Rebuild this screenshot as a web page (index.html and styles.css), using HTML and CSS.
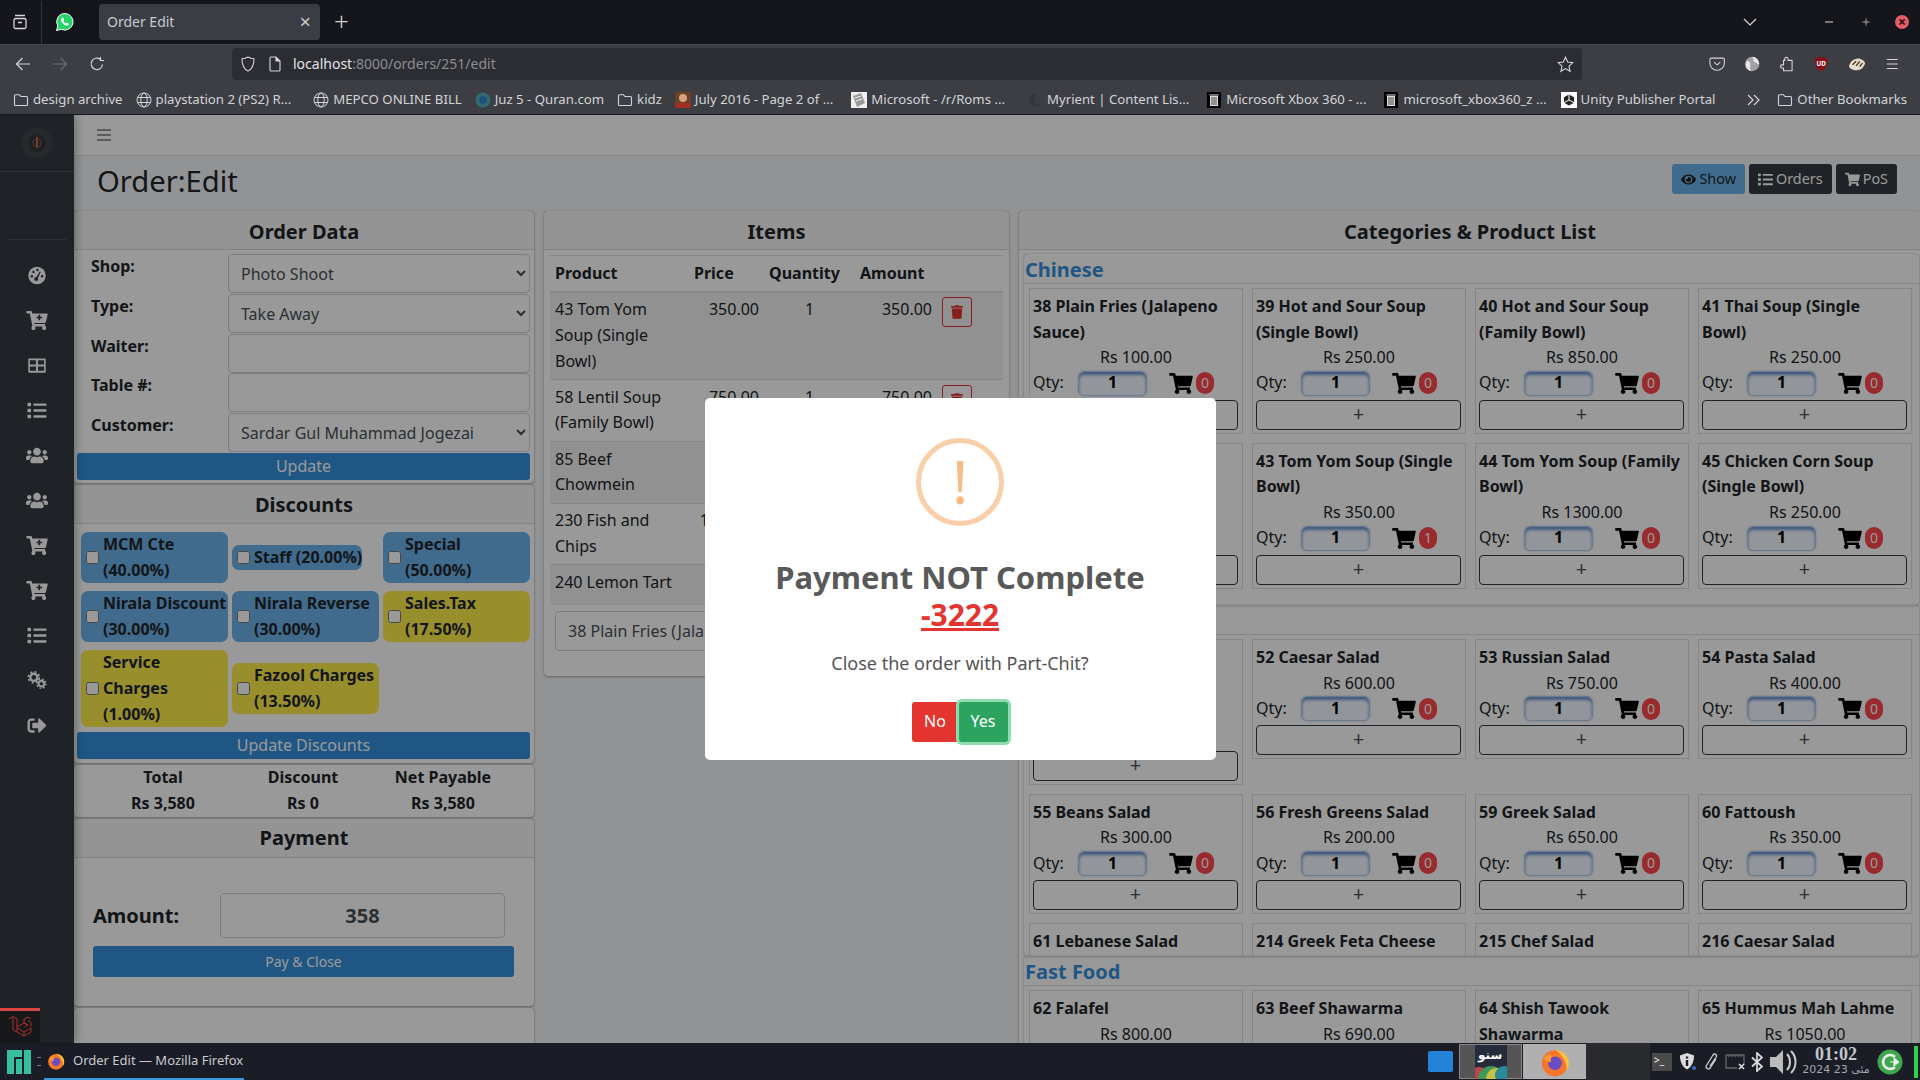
FILE: index.html
```html
<!DOCTYPE html>
<html lang="en">
<head>
  <meta charset="UTF-8">
  <title>Order Edit</title>
  <link rel="stylesheet" href="styles.css">
</head>
<body>

<!-- icon sprite -->
<svg class="sprite" xmlns="http://www.w3.org/2000/svg">
  <symbol id="i-cart" viewBox="0 0 576 512"><path d="M528.12 301.319l47.273-208C578.806 78.301 567.391 64 551.99 64H159.208l-9.166-44.81C147.758 8.021 137.93 0 126.529 0H24C10.745 0 0 10.745 0 24v16c0 13.255 10.745 24 24 24h69.883l70.248 343.435C147.325 417.1 136 435.222 136 456c0 30.928 25.072 56 56 56s56-25.072 56-56c0-15.674-6.447-29.835-16.824-40h209.647C430.447 426.165 424 440.326 424 456c0 30.928 25.072 56 56 56s56-25.072 56-56c0-22.172-12.888-41.332-31.579-50.405l5.517-24.276c3.413-15.018-8.002-29.319-23.403-29.319H218.117l-6.545-32h293.145c11.206 0 20.92-7.754 23.403-18.681z"/></symbol>
  <symbol id="i-cartplus" viewBox="0 0 576 512"><path d="M528.12 301.319l47.273-208C578.806 78.301 567.391 64 551.99 64H159.208l-9.166-44.81C147.758 8.021 137.93 0 126.529 0H24C10.745 0 0 10.745 0 24v16c0 13.255 10.745 24 24 24h69.883l70.248 343.435C147.325 417.1 136 435.222 136 456c0 30.928 25.072 56 56 56s56-25.072 56-56c0-15.674-6.447-29.835-16.824-40h209.647C430.447 426.165 424 440.326 424 456c0 30.928 25.072 56 56 56s56-25.072 56-56c0-22.172-12.888-41.332-31.579-50.405l5.517-24.276c3.413-15.018-8.002-29.319-23.403-29.319H218.117l-6.545-32h293.145c11.206 0 20.92-7.754 23.403-18.681z"/><path d="M350 100v150M275 175h150" stroke="#343a40" stroke-width="46" fill="none"/></symbol>
  <symbol id="i-trash" viewBox="0 0 448 512"><path d="M432 32H312l-9.4-18.7A24 24 0 0 0 281.1 0H166.8a23.72 23.72 0 0 0-21.4 13.3L136 32H16A16 16 0 0 0 0 48v32a16 16 0 0 0 16 16h416a16 16 0 0 0 16-16V48a16 16 0 0 0-16-16zM53.2 467a48 48 0 0 0 47.9 45h245.8a48 48 0 0 0 47.9-45L416 128H32z"/></symbol>
  <symbol id="i-eye" viewBox="0 0 576 512"><path d="M572.52 241.4C518.29 135.59 410.93 64 288 64S57.68 135.64 3.48 241.41a32.35 32.35 0 0 0 0 29.19C57.71 376.41 165.07 448 288 448s230.32-71.64 284.52-177.41a32.35 32.35 0 0 0 0-29.19zM288 400a144 144 0 1 1 144-144 143.93 143.93 0 0 1-144 144zm0-240a95.31 95.31 0 0 0-25.31 3.79 47.85 47.85 0 0 1-66.9 66.9A95.78 95.78 0 1 0 288 160z"/></symbol>
  <symbol id="i-list" viewBox="0 0 512 512"><path d="M80 368H16a16 16 0 0 0-16 16v64a16 16 0 0 0 16 16h64a16 16 0 0 0 16-16v-64a16 16 0 0 0-16-16zm0-320H16A16 16 0 0 0 0 64v64a16 16 0 0 0 16 16h64a16 16 0 0 0 16-16V64a16 16 0 0 0-16-16zm0 160H16a16 16 0 0 0-16 16v64a16 16 0 0 0 16 16h64a16 16 0 0 0 16-16v-64a16 16 0 0 0-16-16zm416 176H176a16 16 0 0 0-16 16v32a16 16 0 0 0 16 16h320a16 16 0 0 0 16-16v-32a16 16 0 0 0-16-16zm0-320H176a16 16 0 0 0-16 16v32a16 16 0 0 0 16 16h320a16 16 0 0 0 16-16V80a16 16 0 0 0-16-16zm0 160H176a16 16 0 0 0-16 16v32a16 16 0 0 0 16 16h320a16 16 0 0 0 16-16v-32a16 16 0 0 0-16-16z"/></symbol>
  <symbol id="i-users" viewBox="0 0 640 512"><path d="M96 224c35.3 0 64-28.7 64-64s-28.7-64-64-64-64 28.7-64 64 28.7 64 64 64zm448 0c35.3 0 64-28.7 64-64s-28.7-64-64-64-64 28.7-64 64 28.7 64 64 64zm32 32h-64c-17.6 0-33.5 7.1-45.1 18.6 40.3 22.1 68.9 62 75.1 109.4h66c17.7 0 32-14.3 32-32v-32c0-35.3-28.7-64-64-64zm-256 0c61.9 0 112-50.1 112-112S381.9 32 320 32 208 82.1 208 144s50.1 112 112 112zm76.8 32h-8.3c-20.8 10-43.9 16-68.5 16s-47.6-6-68.5-16h-8.3C179.6 288 128 339.6 128 403.2V432c0 26.5 21.5 48 48 48h288c26.5 0 48-21.5 48-48v-28.8c0-63.6-51.6-115.2-115.2-115.2zm-223.7-13.4C161.5 263.1 145.6 256 128 256H64c-35.3 0-64 28.7-64 64v32c0 17.7 14.3 32 32 32h65.9c6.3-47.4 34.9-87.3 75.2-109.4z"/></symbol>
  <symbol id="i-out" viewBox="0 0 512 512"><path d="M497 273L329 441c-15 15-41 4.500-41-17v-96H152c-13.300 0-24-10.700-24-24v-96c0-13.300 10.700-24 24-24h136V88c0-21.400 25.900-32 41-17l168 168c9.300 9.400 9.300 24.600 0 34zM192 436v-40c0-6.600-5.400-12-12-12H96c-17.700 0-32-14.300-32-32V160c0-17.700 14.300-32 32-32h84c6.600 0 12-5.400 12-12V76c0-6.600-5.400-12-12-12H96c-53 0-96 43-96 96v192c0 53 43 96 96 96h84c6.600 0 12-5.400 12-12z"/></symbol>
  <symbol id="i-gauge" viewBox="0 0 24 24"><circle cx="12" cy="12" r="11"/><g fill="#343a40"><circle cx="5.500" cy="13" r="1.500"/><circle cx="7.500" cy="7.500" r="1.500"/><circle cx="12.500" cy="5" r="1.500"/><circle cx="18.500" cy="13" r="1.500"/><circle cx="11" cy="16.500" r="2.500"/><path d="M10.500 15.500l5-8.500 1.200.6-4.200 9z"/></g></symbol>
  <symbol id="i-table" viewBox="0 0 24 24"><path d="M2 3h20a1 1 0 0 1 1 1v16a1 1 0 0 1-1 1H2a1 1 0 0 1-1-1V4a1 1 0 0 1 1-1zm1 2.500v5.200h7.700V5.500zm10.300 0v5.200H21V5.500zM3 13.300v5.200h7.700v-5.200zm10.300 0v5.200H21v-5.200z" fill-rule="evenodd"/></symbol>
  <symbol id="i-cogs" viewBox="0 0 24 24"><circle cx="8" cy="8" r="4.500" fill="none" stroke="currentColor" stroke-width="3"/><circle cx="8" cy="8" r="7" fill="none" stroke="currentColor" stroke-width="2" stroke-dasharray="2.600 2.900"/><circle cx="17.500" cy="16" r="3.500" fill="none" stroke="currentColor" stroke-width="2.600"/><circle cx="17.500" cy="16" r="5.800" fill="none" stroke="currentColor" stroke-width="1.800" stroke-dasharray="2.300 2.250"/></symbol>
  <symbol id="i-folder" viewBox="0 0 16 16"><path d="M1.500 4v8.500a1 1 0 0 0 1 1h11a1 1 0 0 0 1-1V5.500a1 1 0 0 0-1-1H8L6.500 2.800H2.500a1 1 0 0 0-1 1.200z" fill="none" stroke="currentColor" stroke-width="1.100"/></symbol>
  <symbol id="i-globe" viewBox="0 0 16 16"><g fill="none" stroke="currentColor" stroke-width="1"><circle cx="8" cy="8" r="7"/><ellipse cx="8" cy="8" rx="3.200" ry="7"/><path d="M1.500 5.500h13M1.500 10.500h13"/></g></symbol>
  <symbol id="i-xboxbin" viewBox="0 0 16 16"><rect x="1" width="14" height="16" fill="#000"/><path d="M4 4h8v10H4zM3.500 2.500h9v1h-9z" fill="#ddd"/><path d="M6 5v8M8 5v8M10 5v8" stroke="#222" stroke-width=".8"/></symbol>
  <symbol id="i-fox" viewBox="0 0 24 24"><circle cx="12" cy="13" r="10.500" fill="#f5762a"/><path d="M12 2c6 1 11 5 11 11 0 3-1 5-2 6 1-5-2-12-9-17z" fill="#ffc23f"/><circle cx="12" cy="13" r="5.500" fill="#6d4bc0"/><path d="M3 9c2-3 5-3 7-2-1 1-2 3-1 5-3 0-5-1-6-3z" fill="#ff9a2e"/></symbol>
</svg>

<!-- browser chrome -->
<header class="tabbar">
  <span class="tab-icon">
    <svg width="18" height="18" viewBox="0 0 18 18" fill="none" stroke="#d8d8dc" stroke-width="1.300"><rect x="3" y="5.500" width="12" height="10" rx="1.500"/><path d="M4 2.500h10M7 9.500h4"/></svg>
  </span>
  <span class="tab-pin">
    <svg width="20" height="20" viewBox="0 0 20 20"><path d="M10 1.500a8.300 8.300 0 0 0-7.200 12.500L1.500 18.500l4.700-1.200A8.300 8.300 0 1 0 10 1.500z" fill="#25d366" stroke="#fff" stroke-width="1"/><path d="M7 5.800c-1 .7-1.200 2-.6 3.400.8 1.800 2.400 3.500 4.300 4.200 1.400.5 2.500.1 3-1l-.1-.9-1.900-1-1 .9c-1-.4-1.900-1.300-2.400-2.400l.8-1-.9-2.400z" fill="#fff"/></svg>
  </span>
  <div class="tab">
    <span>Order Edit</span>
    <span class="tab-x">×</span>
  </div>
  <span class="tab-new">+</span>
  <div class="win-btns">
    <svg class="win-chev" width="14" height="8" viewBox="0 0 14 8" fill="none" stroke="#d8d8dc" stroke-width="1.200"><path d="M1 1l6 6 6-6"/></svg>
    <span class="win-min"></span>
    <svg class="win-max" width="10" height="10" viewBox="0 0 10 10" fill="#777"><path d="M5 0l1 4 4 1-4 1-1 4-1-4-4-1 4-1z"/></svg>
    <span class="win-close">×</span>
  </div>
</header>

<nav class="navbar">
  <svg class="nav-btn" width="16" height="16" viewBox="0 0 16 16" fill="none" stroke="#d5d5da" stroke-width="1.200"><path d="M15 8H1.500M7.500 2l-6 6 6 6"/></svg>
  <svg class="nav-btn" width="16" height="16" viewBox="0 0 16 16" fill="none" stroke="#6c6e73" stroke-width="1.200"><path d="M1 8h13.500M8.500 2l6 6-6 6"/></svg>
  <svg class="nav-btn" width="16" height="16" viewBox="0 0 16 16" fill="none" stroke="#d5d5da" stroke-width="1.200"><path d="M13.500 8.500A5.700 5.700 0 1 1 11.500 3.500M11.500 1v3.500H15"/></svg>
  <div class="urlbar">
    <svg width="16" height="16" viewBox="0 0 16 16" fill="none" stroke="#d5d5da" stroke-width="1.100"><path d="M8 1c2 1.200 4 1.700 6 1.800 0 6-2 10.500-6 12.200C4 13.300 2 8.800 2 2.800 4 2.700 6 2.200 8 1z"/></svg>
    <svg class="url-page" width="14" height="16" viewBox="0 0 14 16" fill="none" stroke="#d5d5da" stroke-width="1.100"><path d="M2 2a1 1 0 0 1 1-1h5l4 4v9a1 1 0 0 1-1 1H3a1 1 0 0 1-1-1z"/><path d="M8 1v4h4" fill="#d5d5da"/></svg>
    <span class="url-text"><b>localhost</b>:8000/orders/251/edit</span>
    <svg class="url-star" width="17" height="17" viewBox="0 0 17 17" fill="none" stroke="#d5d5da" stroke-width="1.100"><path d="M8.500 1.200l2.200 4.800 5.200.6-3.900 3.500 1.100 5.200-4.600-2.700-4.600 2.700 1.100-5.200L1.100 6.600 6.300 6z"/></svg>
  </div>
  <div class="nav-tools">
    <svg width="18" height="16" viewBox="0 0 18 16" fill="none" stroke="#d5d5da" stroke-width="1.200"><path d="M2.500 1.500h13a1.500 1.500 0 0 1 1.500 1.500v4a8 8 0 0 1-16 0V3a1.500 1.500 0 0 1 1.500-1.500zM5.500 6L9 9l3.500-3"/></svg>
    <svg width="18" height="18" viewBox="0 0 18 18"><circle cx="9" cy="9" r="8" fill="#a2a2a4"/><path d="M9 1a8 8 0 0 1 8 8c-2 1-3-2-5-2s-1-4-3-6zM3 6c2-1 4 1 4 3s-1 5 1 8a8 8 0 0 1-6-8z" fill="#e6e6e8"/></svg>
    <svg width="18" height="18" viewBox="0 0 18 18" fill="none" stroke="#d5d5da" stroke-width="1.200"><path d="M8 1.500c1.500 0 2.500 1 2 3.500h4.500v11.500H5v-3H2.500c-1 0-1-3.500 0-3.500H5V5h1.500C6 3 6.500 1.500 8 1.500z"/></svg>
    <svg width="18" height="18" viewBox="0 0 18 18"><path d="M9 1l7 2c0 7-2 12-7 14C4 15 2 10 2 3z" fill="#8a0f1d"/><text x="9" y="11.500" class="ublock">UD</text></svg>
    <svg width="20" height="16" viewBox="0 0 20 16"><path d="M1 11c1-5 5-9 10-9 4 0 7 3 8 5-1 4-4 8-9 8-4 0-7-1-9-4z" fill="#e5dcc9"/><path d="M5 9l4-4M9 10l4-5M13 11l3-4" stroke="#3a2f25" stroke-width="1.400"/></svg>
    <svg width="16" height="14" viewBox="0 0 16 14" fill="none" stroke="#d5d5da" stroke-width="1.200"><path d="M2 2h12M2 7h12M2 12h12"/></svg>
  </div>
</nav>

<div class="bookmarks">
  <a class="bm"><svg class="bm-ico"><use href="#i-folder"/></svg>design archive</a>
  <a class="bm"><svg class="bm-ico"><use href="#i-globe"/></svg>playstation 2 (PS2) R...</a>
  <a class="bm"><svg class="bm-ico"><use href="#i-globe"/></svg>MEPCO ONLINE BILL</a>
  <a class="bm"><svg class="bm-ico" viewBox="0 0 16 16"><circle cx="8" cy="8" r="7.500" fill="#28a0a8" opacity=".45"/><circle cx="8" cy="8" r="4" fill="#23507a"/></svg>Juz 5 - Quran.com</a>
  <a class="bm"><svg class="bm-ico"><use href="#i-folder"/></svg>kidz</a>
  <a class="bm"><svg class="bm-ico" viewBox="0 0 16 16"><rect width="16" height="16" fill="#6a4026"/><circle cx="8" cy="6" r="4" fill="#d9a27c"/><rect y="11" width="16" height="5" fill="#a32f24"/></svg>July 2016 - Page 2 of ...</a>
  <a class="bm"><svg class="bm-ico" viewBox="0 0 16 16"><rect width="16" height="16" fill="#eee"/><path d="M2 4l8-3 4 10-8 4z" fill="#9a9a9a"/><path d="M4 6l6-2M5 9l6-2" stroke="#eee"/></svg>Microsoft - /r/Roms ...</a>
  <a class="bm"><svg class="bm-ico" viewBox="0 0 16 16"><path d="M10 2a6.500 6.500 0 1 0 3 11 6 6 0 0 1-3-11z" fill="#34353f"/></svg>Myrient | Content Lis...</a>
  <a class="bm"><svg class="bm-ico"><use href="#i-xboxbin"/></svg>Microsoft Xbox 360 - ...</a>
  <a class="bm"><svg class="bm-ico"><use href="#i-xboxbin"/></svg>microsoft_xbox360_z ...</a>
  <a class="bm"><svg class="bm-ico" viewBox="0 0 16 16"><rect width="16" height="16" fill="#fff"/><path d="M8 2.500l5 2.800v5.400l-5 2.800-5-2.800V5.300z" fill="#222"/><path d="M8 8V2.500M8 8l5 2.700M8 8l-5 2.700" stroke="#fff"/></svg>Unity Publisher Portal</a>
  <svg class="bm-more" width="14" height="12" viewBox="0 0 14 12" fill="none" stroke="#d5d5da" stroke-width="1.200"><path d="M1 1l5 5-5 5M7 1l5 5-5 5"/></svg>
  <a class="bm"><svg class="bm-ico"><use href="#i-folder"/></svg>Other Bookmarks</a>
</div>

<!-- the page -->
<div class="page">
  <aside class="sidebar">
    <div class="brand">
      <svg width="34" height="34" viewBox="0 0 34 34"><circle cx="17" cy="17" r="15" fill="#40464c" stroke="#3c4248" stroke-width="3" stroke-dasharray="3 2"/><circle cx="17" cy="17" r="9" fill="#34393e"/><path d="M17 11v11" stroke="#b07040" stroke-width="2"/><circle cx="17" cy="17" r="4" fill="none" stroke="#9a5040"/></svg>
    </div>
    <div class="side-user"></div>
    <ul class="side-menu">
      <li><svg class="side-ico"><use href="#i-gauge"/></svg></li>
      <li><svg class="side-ico"><use href="#i-cartplus"/></svg></li>
      <li><svg class="side-ico"><use href="#i-table"/></svg></li>
      <li><svg class="side-ico"><use href="#i-list"/></svg></li>
      <li><svg class="side-ico"><use href="#i-users"/></svg></li>
      <li><svg class="side-ico"><use href="#i-users"/></svg></li>
      <li><svg class="side-ico"><use href="#i-cartplus"/></svg></li>
      <li><svg class="side-ico"><use href="#i-cartplus"/></svg></li>
      <li><svg class="side-ico"><use href="#i-list"/></svg></li>
      <li><svg class="side-ico"><use href="#i-cogs"/></svg></li>
      <li><svg class="side-ico"><use href="#i-out"/></svg></li>
    </ul>
  </aside>

  <main class="content">
    <div class="topnav">
      <svg width="14" height="14" viewBox="0 0 14 14" fill="none" stroke="#7a7a7a" stroke-width="1.600"><path d="M0 2h14M0 7h14M0 12h14"/></svg>
    </div>

    <div class="title-row">
      <h1>Order:Edit</h1>
      <div class="title-btns">
        <a class="btn btn-info"><svg class="btn-ico"><use href="#i-eye"/></svg>Show</a>
        <a class="btn btn-dark"><svg class="btn-ico"><use href="#i-list"/></svg>Orders</a>
        <a class="btn btn-dark"><svg class="btn-ico"><use href="#i-cart"/></svg>PoS</a>
      </div>
    </div>

    <div class="columns">
      <div class="col-left">
        <section class="card card-order">
          <h3 class="card-head">Order Data</h3>
          <div class="form-rows">
            <label>Shop:</label>
            <select><option>Photo Shoot</option></select>
            <label>Type:</label>
            <select><option>Take Away</option></select>
            <label>Waiter:</label>
            <input type="text">
            <label>Table #:</label>
            <input type="text">
            <label>Customer:</label>
            <select><option>Sardar Gul Muhammad Jogezai</option></select>
          </div>
          <button class="wide-btn">Update</button>
        </section>

        <section class="card card-disc">
          <h3 class="card-head">Discounts</h3>
          <div class="chips">
            <label class="chip chip-blue"><input type="checkbox">MCM Cte (40.00%)</label>
            <label class="chip chip-blue"><input type="checkbox">Staff (20.00%)</label>
            <label class="chip chip-blue"><input type="checkbox">Special (50.00%)</label>
            <label class="chip chip-blue"><input type="checkbox">Nirala Discount (30.00%)</label>
            <label class="chip chip-blue"><input type="checkbox">Nirala Reverse (30.00%)</label>
            <label class="chip chip-yellow"><input type="checkbox">Sales.Tax (17.50%)</label>
            <label class="chip chip-yellow"><input type="checkbox">Service Charges (1.00%)</label>
            <label class="chip chip-yellow"><input type="checkbox">Fazool Charges (13.50%)</label>
          </div>
          <button class="wide-btn">Update Discounts</button>
        </section>

        <section class="card totals">
          <b>Total</b><b>Discount</b><b>Net Payable</b>
          <b>Rs 3,580</b><b>Rs 0</b><b>Rs 3,580</b>
        </section>

        <section class="card card-pay">
          <h3 class="card-head">Payment</h3>
          <div class="pay-body">
            <div class="pay-row">
              <label>Amount:</label>
              <input type="text" value="358">
            </div>
            <button class="pay-btn">Pay &amp; Close</button>
          </div>
        </section>

        <section class="card card-empty"></section>
      </div>

      <section class="card card-items">
        <h3 class="card-head">Items</h3>
        <table class="items">
          <thead>
            <tr><th>Product</th><th>Price</th><th>Quantity</th><th>Amount</th><th></th></tr>
          </thead>
          <tbody>
            <tr><td>43 Tom Yom Soup (Single Bowl)</td><td class="num">350.00</td><td class="mid">1</td><td class="num">350.00</td><td><a class="trash"><svg><use href="#i-trash"/></svg></a></td></tr>
            <tr><td>58 Lentil Soup (Family Bowl)</td><td class="num">750.00</td><td class="mid">1</td><td class="num">750.00</td><td><a class="trash"><svg><use href="#i-trash"/></svg></a></td></tr>
            <tr><td>85 Beef Chowmein</td><td class="num">800.00</td><td class="mid">1</td><td class="num">800.00</td><td><a class="trash"><svg><use href="#i-trash"/></svg></a></td></tr>
            <tr><td>230 Fish and Chips</td><td class="num">1200.00</td><td class="mid">1</td><td class="num">1200.00</td><td><a class="trash"><svg><use href="#i-trash"/></svg></a></td></tr>
            <tr><td>240 Lemon Tart</td><td class="num">480.00</td><td class="mid">1</td><td class="num">480.00</td><td><a class="trash"><svg><use href="#i-trash"/></svg></a></td></tr>
          </tbody>
        </table>
        <div class="add-select">38 Plain Fries (Jalapeno Sauce)</div>
      </section>

      <section class="card card-cats">
        <h3 class="card-head">Categories &amp; Product List</h3>

        <div class="cat">
          <h4>Chinese</h4>
          <div class="prod-grid">
            <div class="prod"><b>38 Plain Fries (Jalapeno Sauce)</b><p>Rs 100.00</p><div class="qty"><span>Qty:</span><input value="1"><svg><use href="#i-cart"/></svg><em>0</em></div><button>+</button></div>
            <div class="prod"><b>39 Hot and Sour Soup (Single Bowl)</b><p>Rs 250.00</p><div class="qty"><span>Qty:</span><input value="1"><svg><use href="#i-cart"/></svg><em>0</em></div><button>+</button></div>
            <div class="prod"><b>40 Hot and Sour Soup (Family Bowl)</b><p>Rs 850.00</p><div class="qty"><span>Qty:</span><input value="1"><svg><use href="#i-cart"/></svg><em>0</em></div><button>+</button></div>
            <div class="prod"><b>41 Thai Soup (Single Bowl)</b><p>Rs 250.00</p><div class="qty"><span>Qty:</span><input value="1"><svg><use href="#i-cart"/></svg><em>0</em></div><button>+</button></div>
            <div class="prod"><b>42 Thai Soup (Family Bowl)</b><p>Rs 850.00</p><div class="qty"><span>Qty:</span><input value="1"><svg><use href="#i-cart"/></svg><em>0</em></div><button>+</button></div>
            <div class="prod"><b>43 Tom Yom Soup (Single Bowl)</b><p>Rs 350.00</p><div class="qty"><span>Qty:</span><input value="1"><svg><use href="#i-cart"/></svg><em>1</em></div><button>+</button></div>
            <div class="prod"><b>44 Tom Yom Soup (Family Bowl)</b><p>Rs 1300.00</p><div class="qty"><span>Qty:</span><input value="1"><svg><use href="#i-cart"/></svg><em>0</em></div><button>+</button></div>
            <div class="prod"><b>45 Chicken Corn Soup (Single Bowl)</b><p>Rs 250.00</p><div class="qty"><span>Qty:</span><input value="1"><svg><use href="#i-cart"/></svg><em>0</em></div><button>+</button></div>
          </div>
        </div>

        <div class="cat">
          <h4>Salads</h4>
          <div class="prod-grid">
            <div class="prod"><b>51 Green Garden Salad (Family)</b><p>Rs 500.00</p><div class="qty"><span>Qty:</span><input value="1"><svg><use href="#i-cart"/></svg><em>0</em></div><button>+</button></div>
            <div class="prod"><b>52 Caesar Salad</b><p>Rs 600.00</p><div class="qty"><span>Qty:</span><input value="1"><svg><use href="#i-cart"/></svg><em>0</em></div><button>+</button></div>
            <div class="prod"><b>53 Russian Salad</b><p>Rs 750.00</p><div class="qty"><span>Qty:</span><input value="1"><svg><use href="#i-cart"/></svg><em>0</em></div><button>+</button></div>
            <div class="prod"><b>54 Pasta Salad</b><p>Rs 400.00</p><div class="qty"><span>Qty:</span><input value="1"><svg><use href="#i-cart"/></svg><em>0</em></div><button>+</button></div>
            <div class="prod"><b>55 Beans Salad</b><p>Rs 300.00</p><div class="qty"><span>Qty:</span><input value="1"><svg><use href="#i-cart"/></svg><em>0</em></div><button>+</button></div>
            <div class="prod"><b>56 Fresh Greens Salad</b><p>Rs 200.00</p><div class="qty"><span>Qty:</span><input value="1"><svg><use href="#i-cart"/></svg><em>0</em></div><button>+</button></div>
            <div class="prod"><b>59 Greek Salad</b><p>Rs 650.00</p><div class="qty"><span>Qty:</span><input value="1"><svg><use href="#i-cart"/></svg><em>0</em></div><button>+</button></div>
            <div class="prod"><b>60 Fattoush</b><p>Rs 350.00</p><div class="qty"><span>Qty:</span><input value="1"><svg><use href="#i-cart"/></svg><em>0</em></div><button>+</button></div>
            <div class="prod"><b>61 Lebanese Salad</b></div>
            <div class="prod"><b>214 Greek Feta Cheese</b></div>
            <div class="prod"><b>215 Chef Salad</b></div>
            <div class="prod"><b>216 Caesar Salad</b></div>
          </div>
        </div>

        <div class="cat">
          <h4>Fast Food</h4>
          <div class="prod-grid">
            <div class="prod"><b>62 Falafel</b><p>Rs 800.00</p></div>
            <div class="prod"><b>63 Beef Shawarma</b><p>Rs 690.00</p></div>
            <div class="prod"><b>64 Shish Tawook Shawarma</b></div>
            <div class="prod"><b>65 Hummus Mah Lahme</b><p>Rs 1050.00</p></div>
          </div>
        </div>
      </section>
    </div>
  </main>

  <!-- alert over the page -->
  <div class="backdrop">
    <div class="modal">
      <div class="modal-icon">!</div>
      <h2>Payment NOT Complete<br><u>-3222</u></h2>
      <p>Close the order with Part-Chit?</p>
      <div class="modal-btns">
        <button class="btn-no">No</button>
        <button class="btn-yes">Yes</button>
      </div>
    </div>
  </div>

  <div class="debugbar">
    <svg width="24" height="24" viewBox="0 0 24 24" fill="none" stroke="#a8302c" stroke-width="1"><path d="M1 4l4-2.500L9 4v13l7 4 7-4v-4l-7 4-7-4M5 1.500V15l4 2M16 21v-4M9 12l7-4 4 2-3.500 2M20 5.500l3 2v4M16 8V4l4-2 3 2M16 8l4 2"/></svg>
  </div>
</div>

<!-- desktop panel -->
<footer class="taskbar">
  <svg class="tb-logo" width="26" height="26" viewBox="0 0 26 26" fill="#35bf9c"><path d="M1 1h15v7H8v17H1zM10 10h6v15h-6zM18 1h7v24h-7z"/></svg>
  <span class="tb-dots"></span>
  <div class="tb-task">
    <svg width="18" height="18"><use href="#i-fox"/></svg>
    <span>Order Edit — Mozilla Firefox</span>
  </div>
  <div class="tb-right">
    <span class="tb-blue"></span>
    <span class="tb-tile tb-tile-dark">
      <svg width="32" height="34" viewBox="0 0 32 34"><rect width="32" height="34" fill="#252b3a"/><circle cx="4" cy="30" r="8" fill="#c04545"/><circle cx="16" cy="34" r="13" fill="#3f9a5a"/><circle cx="22" cy="34" r="11" fill="#c8c040"/><circle cx="29" cy="30" r="9" fill="#2a8a9a"/></svg>
      <i class="tile-word">سنو</i>
    </span>
    <span class="tb-tile tb-tile-light"><svg width="30" height="30"><use href="#i-fox"/></svg></span>
    <span class="tb-gap"></span>
    <span class="tb-term">&gt;_</span>
    <svg class="tray" width="18" height="20" viewBox="0 0 18 20"><path d="M8 1l7 2.500c0 6-2 11-7 14C3 14.500 1 9.500 1 3.500z" fill="#ddd"/><path d="M6.800 4.500h2.400v2H6.800zM6.800 8h2.400v6H6.800z" fill="#1a1d26"/><circle cx="15" cy="16" r="2" fill="#3a6fc0"/></svg>
    <svg class="tray" width="16" height="20" viewBox="0 0 16 20" fill="none" stroke="#ccc" stroke-width="1.300"><path d="M13 7l-6 9c-1.500 2-5 0-3.500-2.500L10 3c1.500-2 4.500-.5 3.200 2L7 14"/></svg>
    <svg class="tray" width="20" height="16" viewBox="0 0 20 16" fill="none" stroke="#666" stroke-width="1.300"><path d="M1 1h18v10M1 1v13h11"/><path d="M4 1v2M7 1v2M10 1v2M13 1v2M16 1v2" /><path d="M14 10l5 5M19 10l-5 5" stroke="#ddd" stroke-width="1.600"/></svg>
    <svg class="tray" width="12" height="20" viewBox="0 0 12 20" fill="none" stroke="#ddd" stroke-width="1.700"><path d="M1 5.500l10 9-5 4.500V1l5 4.500-10 9"/></svg>
    <svg class="tray tray-vol" width="28" height="26" viewBox="0 0 28 26"><path d="M1 8h6l7-7v24l-7-7H1z" fill="#bbb"/><path d="M18 5c4 4 4 12 0 16M22 2c6 6 6 16 0 22" fill="none" stroke="#ccc" stroke-width="2"/></svg>
    <div class="clock">
      <b>01:02</b>
      <span>2024 مئی 23</span>
    </div>
    <svg class="tray" width="26" height="26" viewBox="0 0 26 26"><circle cx="13" cy="13" r="12.500" fill="#3fa84f"/><path d="M18 8a7 7 0 1 0 0 10" fill="none" stroke="#eee" stroke-width="2.600"/><path d="M13 13h7M17 9l5 4-5 4z" fill="#eee" stroke="#eee"/></svg>
    <span class="tb-bar"></span>
  </div>
</footer>

</body>
</html>
```

FILE: styles.css
```css
* {
  box-sizing: border-box;
}

html, body {
  height: 100%;
}

body {
  margin: 0;
  font-family: "Noto Sans", sans-serif;
  font-size: 16px;
  line-height: 25.6px;
  color: #212529;
  display: flex;
  flex-direction: column;
  overflow: hidden;
}

.sprite {
  display: none;
}

/* browser chrome */
.tabbar {
  height: 44px;
  flex: none;
  background-color: #14161b;
  display: flex;
  align-items: center;
  color: #d8d8dc;
  font-size: 14px;
}

.tab-icon {
  width: 42px;
  height: 43px;
  padding-left: 11px;
  display: flex;
  align-items: center;
  border-right: 1px solid #33353a;
}

.tab-pin {
  width: 57px;
  padding-left: 13px;
  display: flex;
}

.tab {
  width: 221px;
  height: 36px;
  background-color: #3b3d44;
  border-radius: 4px;
  padding: 0 9px 0 8px;
  display: flex;
  align-items: center;
  justify-content: space-between;
  color: #c8c9cd;
}

.tab-x {
  font-size: 20px;
}

.tab-new {
  margin-left: 14px;
  font-size: 26px;
  font-weight: 300;
}

.win-btns {
  margin-left: auto;
  display: flex;
  align-items: center;
  padding-right: 11px;
}

.win-chev {
  margin-right: 68px;
}

.win-min {
  width: 8px;
  height: 2px;
  background-color: #777;
  margin-right: 28px;
}

.win-max {
  margin-right: 24px;
}

.win-close {
  width: 14px;
  height: 14px;
  border-radius: 50%;
  background-color: #e35d6a;
  color: #2a1015;
  font-size: 14px;
  font-weight: 700;
  line-height: 13px;
  text-align: center;
}

.navbar {
  height: 36px;
  flex: none;
  background-color: #3c3e44;
  display: flex;
  align-items: flex-end;
  border-top: 1px solid #44464c;
}

.nav-btn {
  margin: 0 0 8px 15px;
  flex: none;
}

.nav-btn + .nav-btn {
  margin-left: 21px;
}

.urlbar {
  width: 1350px;
  height: 32px;
  margin-left: 127px;
  background-color: #2b2d32;
  border-radius: 4px;
  display: flex;
  align-items: center;
  padding: 0 8px 0 8px;
  color: #8d8e93;
  font-size: 14px;
}

.url-page {
  margin-left: 12px;
}

.url-text {
  margin-left: 11px;
}

.url-text b {
  font-weight: 400;
  color: #e2e2e6;
}

.url-star {
  margin-left: auto;
}

.nav-tools {
  margin-left: 127px;
  width: 190px;
  height: 32px;
  display: flex;
  align-items: center;
  gap: 18.5px;
}

.ublock {
  font-size: 7px;
  font-weight: 700;
  fill: #fff;
  text-anchor: middle;
}

.bookmarks {
  height: 35px;
  flex: none;
  background-color: #3c3e44;
  border-bottom: 1px solid #17181c;
  display: flex;
  align-items: center;
  padding: 6px 0 0 13px;
  font-size: 13.2px;
  color: #d3d4d8;
  white-space: nowrap;
}

.bm {
  display: flex;
  align-items: center;
  gap: 4px;
  margin-right: 13px;
}

.bm:nth-child(2) { margin-right: 22px; }
.bm:nth-child(6) { margin-right: 18px; }
.bm:nth-child(7) { margin-right: 22px; }
.bm:nth-child(8) { margin-right: 17px; }
.bm:nth-child(9) { margin-right: 17px; }
.bm:nth-child(10) { margin-right: 14px; }

.bm-ico {
  width: 16px;
  height: 16px;
  flex: none;
}

.bm-more {
  margin: 0 16px 0 auto;
}

/* page */
.page {
  flex: 1;
  min-height: 0;
  position: relative;
  display: flex;
  overflow: hidden;
  background-color: #f4f6f9;
}

.sidebar {
  width: 74px;
  flex: none;
  background-color: #343a40;
  box-shadow: 0 0 10px rgba(0, 0, 0, 0.4);
  z-index: 1;
}

.brand {
  height: 57px;
  border-bottom: 1px solid #4b545c;
  display: flex;
  align-items: center;
  justify-content: center;
}

.side-user {
  height: 68px;
  margin: 0 8px;
  border-bottom: 1px solid #4b545c;
}

.side-menu {
  list-style: none;
  margin: 13px 0 0;
  padding: 0;
}

.side-menu li {
  height: 45px;
  display: flex;
  align-items: center;
  justify-content: center;
  color: #fff;
}

.side-ico {
  width: 22px;
  height: 19px;
  fill: currentColor;
}

.content {
  flex: 1;
  min-width: 0;
}

.topnav {
  height: 41px;
  background-color: #fff;
  border-bottom: 1px solid #dee2e6;
  padding-left: 23px;
  display: flex;
  align-items: center;
}

.title-row {
  height: 55px;
  padding: 0 23px;
  display: flex;
  align-items: flex-start;
  justify-content: space-between;
}

h1 {
  margin: 0;
  font-size: 29.2px;
  font-weight: 400;
  line-height: 50px;
}

.title-btns {
  display: flex;
  gap: 4px;
  padding-top: 8px;
}

.btn {
  height: 30px;
  padding: 0 9px;
  border-radius: 3px;
  font-size: 14.4px;
  display: flex;
  align-items: center;
  gap: 3px;
}

.btn-ico {
  width: 15px;
  height: 15px;
  fill: currentColor;
}

.btn-info {
  background-color: #6cb2eb;
  color: #212529;
}

.btn-dark {
  background-color: #343a40;
  color: #fff;
}

.columns {
  display: grid;
  grid-template-columns: 460px 465px 902px;
  gap: 10px 10px;
  align-items: start;
}

.col-left {
  display: flex;
  flex-direction: column;
  gap: 2px;
}

/* cards */
.card {
  background-color: #fff;
  border-radius: 4px;
  box-shadow: 0 0 1px rgba(0, 0, 0, 0.3), 0 1px 3px rgba(0, 0, 0, 0.3);
}

.card-head {
  margin: 0;
  height: 39px;
  background-color: rgba(0, 0, 0, 0.03);
  border-bottom: 1px solid rgba(0, 0, 0, 0.125);
  font-size: 20px;
  font-weight: 700;
  line-height: 41px;
  text-align: center;
}

.card-order {
  height: 272px;
}

.form-rows {
  display: grid;
  grid-template-columns: 154px 302px;
  grid-auto-rows: 39.8px;
  padding-top: 4px;
}

.form-rows label {
  font-weight: 700;
  padding-left: 17px;
  line-height: 25px;
}

.form-rows input,
.form-rows select {
  height: 39px;
  border: 1px solid #ced4da;
  border-radius: 4px;
  background-color: #fff;
  color: #495057;
  font: inherit;
  padding: 1px 8px 0;
}

.wide-btn {
  display: block;
  width: 453px;
  height: 27px;
  margin-left: 3px;
  background-color: #3490dc;
  border: none;
  border-radius: 3px;
  color: #fff;
  font: inherit;
  padding: 0;
}

.card-disc {
  height: 278px;
}

.card-disc .card-head {
  line-height: 40px;
}

.chips {
  display: grid;
  grid-template-columns: repeat(3, 147px);
  gap: 8px 4px;
  padding: 8px 0 5px 7px;
  align-items: center;
}

.chip {
  justify-self: start;
  display: flex;
  align-items: center;
  gap: 4px;
  padding-left: 5px;
  border-radius: 7px;
  font-weight: 700;
}

.chip input {
  margin: 0;
  width: 13px;
  height: 13px;
  flex: none;
}

.chip-blue {
  background-color: #6cb2eb;
}

.chip-yellow {
  background-color: #ffed4a;
}

.totals {
  height: 52px;
  display: grid;
  grid-template-columns: repeat(3, 140px);
  padding-left: 19px;
  text-align: center;
}

.card-pay {
  height: 187px;
}

.card-pay .card-head {
  line-height: 38px;
}

.pay-body {
  padding: 35px 20px 0 19px;
}

.pay-row {
  display: flex;
  align-items: center;
  font-size: 20px;
  font-weight: 700;
}

.pay-row label {
  width: 127px;
}

.pay-row input {
  width: 285px;
  height: 45px;
  border: 1px solid #ced4da;
  border-radius: 4px;
  background-color: #fff;
  color: #495057;
  font: inherit;
  text-align: center;
}

.pay-btn {
  display: block;
  width: 421px;
  height: 31px;
  margin-top: 8px;
  background-color: #3490dc;
  border: none;
  border-radius: 3px;
  color: #fff;
  font-family: inherit;
  font-size: 14px;
}

.card-empty {
  height: 60px;
}

/* items */
.card-items {
  height: 465px;
  padding-bottom: 25px;
}

.items {
  width: 453px;
  margin: 5px 0 0 6px;
  border-collapse: collapse;
  table-layout: fixed;
}

.items th:nth-child(1) { width: 139px; }
.items th:nth-child(2) { width: 75px; }
.items th:nth-child(3) { width: 91px; }
.items th:nth-child(4) { width: 82px; }

.items th {
  text-align: left;
  padding: 5px 5px 4px;
  border-top: 1px solid #dee2e6;
  border-bottom: 2px solid #dee2e6;
}

.items td {
  padding: 4.8px 5px;
  vertical-align: top;
  border-top: 1px solid #dee2e6;
}

.items tbody tr:nth-child(odd) {
  background-color: rgba(0, 0, 0, 0.05);
}

.items .num {
  text-align: right;
}

.items .mid {
  text-align: center;
}

.trash {
  width: 30px;
  height: 30px;
  border: 1px solid #e3342f;
  border-radius: 3px;
  display: flex;
  align-items: center;
  justify-content: center;
}

.trash svg {
  width: 12px;
  height: 14px;
  fill: #e3342f;
}

.add-select {
  height: 40px;
  margin: 6px 5px 0 11px;
  padding: 0 12px;
  border: 1px solid #ced4da;
  border-radius: 4px;
  color: #495057;
  line-height: 38px;
}

/* products */
.card-cats {
  height: 900px;
  overflow: hidden;
}

.cat {
  height: 351px;
  margin: 4px 2px 0 5px;
  overflow: hidden;
  border-radius: 4px;
  box-shadow: 0 0 1px rgba(0, 0, 0, 0.3), 0 1px 3px rgba(0, 0, 0, 0.2);
}

.cat + .cat {
  margin-top: 0;
}

.cat h4 {
  margin: 0;
  height: 30px;
  padding-left: 1px;
  font-size: 20px;
  font-weight: 700;
  line-height: 32px;
  color: #3490dc;
  border-bottom: 1px solid rgba(0, 0, 0, 0.125);
}

.prod-grid {
  display: grid;
  grid-template-columns: repeat(4, 214px);
  gap: 9px;
  padding: 4px 0 0 5px;
  align-items: start;
}

.prod {
  border: 1px solid rgba(0, 0, 0, 0.125);
  padding: 5px 3px 3px 3px;
}

.prod b {
  display: block;
}

.prod p {
  margin: 0;
  text-align: center;
}

.qty {
  height: 25px;
  display: flex;
  align-items: center;
}

.qty span {
  width: 45px;
}

.qty input {
  width: 69px;
  height: 25px;
  border: 1px solid #b5cde8;
  border-radius: 6px;
  background-color: #f4f9ff;
  box-shadow: inset 0 3px 3px #6f97d6, 0 0 2px #a9c6ea;
  font: inherit;
  font-weight: 700;
  text-align: center;
  padding: 0;
}

.qty svg {
  width: 24px;
  height: 21px;
  margin-left: 22px;
  flex: none;
}

.qty em {
  width: 18px;
  height: 22px;
  margin-left: 3px;
  border-radius: 9px;
  background-color: #ff464e;
  color: #fff;
  font-style: normal;
  font-size: 14px;
  line-height: 22px;
  text-align: center;
}

.prod button {
  display: block;
  width: 205px;
  height: 30px;
  margin-top: 4px;
  background: none;
  border: 1px solid #343a40;
  border-radius: 4px;
  color: #4b5259;
  font: inherit;
  font-size: 20px;
  line-height: 24px;
  padding: 0 0 2px;
}

/* alert */
.backdrop {
  position: absolute;
  inset: 0;
  z-index: 5;
  background-color: rgba(0, 0, 0, 0.4);
  display: flex;
  align-items: center;
  justify-content: center;
}

.modal {
  width: 511px;
  height: 362px;
  background-color: #fff;
  border-radius: 5px;
  padding-top: 40px;
  text-align: center;
}

.modal-icon {
  width: 88px;
  height: 88px;
  margin: 0 auto;
  border: 5px solid #facea8;
  border-radius: 50%;
  color: #f8bb86;
  font-size: 60px;
  line-height: 76px;
}

.modal h2 {
  margin: 33px 0 0;
  font-size: 31px;
  font-weight: 700;
  line-height: 36.5px;
  color: #595959;
}

.modal u {
  font-size: 30px;
  color: #e3342f;
}

.modal p {
  margin: 16px 0 0;
  font-size: 18px;
  line-height: 29px;
  color: #545454;
}

.modal-btns {
  margin-top: 24px;
  display: flex;
  justify-content: center;
}

.modal-btns button {
  height: 40px;
  border: none;
  border-radius: 3px;
  color: #fff;
  font: inherit;
  padding: 0;
}

.btn-no {
  width: 47px;
  margin-left: -1px;
  background-color: #e3342f;
}

.btn-yes {
  width: 49px;
  background-color: #2ca35f;
  box-shadow: 0 0 0 3px #8fdcb0;
  position: relative;
}

.debugbar {
  position: absolute;
  left: 0;
  bottom: 0;
  z-index: 6;
  width: 40px;
  height: 35px;
  background-color: #18181b;
  border-top: 3px solid #d9453f;
  display: flex;
  align-items: center;
  justify-content: center;
}

/* desktop panel */
.taskbar {
  height: 37px;
  flex: none;
  background-color: #1a1d26;
  display: flex;
  align-items: center;
  color: #c9cbd0;
  font-size: 13px;
}

.tb-logo {
  margin-left: 6px;
  flex: none;
}

.tb-dots {
  width: 4px;
  height: 9px;
  margin-left: 5px;
  border-top: 1px solid #777;
  border-bottom: 1px solid #777;
  flex: none;
}

.tb-task {
  width: 200px;
  height: 37px;
  margin-left: 3px;
  padding-left: 3px;
  border-bottom: 2px solid #3498db;
  display: flex;
  align-items: center;
  gap: 8px;
  white-space: nowrap;
}

.tb-task svg {
  flex: none;
}

.tb-right {
  margin-left: auto;
  display: flex;
  align-items: center;
  height: 37px;
}

.tb-blue {
  width: 25px;
  height: 21px;
  background-color: #2283d8;
  border-radius: 2px;
  margin-right: 6px;
}

.tb-tile {
  width: 63px;
  height: 35px;
  display: flex;
  align-items: center;
  justify-content: center;
  position: relative;
}

.tb-tile-dark {
  background-color: #555;
  border: 1px solid #888;
}

.tb-tile-light {
  background-color: #b0b0b0;
  margin-left: 1px;
}

.tile-word {
  position: absolute;
  top: 2px;
  left: 18px;
  color: #fff;
  font-family: "DejaVu Sans", sans-serif;
  font-style: normal;
  font-size: 12px;
  font-weight: 700;
  line-height: 16px;
}

.tb-gap {
  width: 64px;
  height: 37px;
  background-color: #2a2b2f;
}

.tb-term {
  width: 20px;
  height: 18px;
  margin: 0 7px 0 2px;
  background-color: #4a4a4a;
  color: #fff;
  font-size: 10px;
  line-height: 14px;
  padding-left: 2px;
}

.tray {
  flex: none;
  margin-right: 6px;
}

.tray-vol {
  margin-right: 4px;
}

.clock {
  width: 70px;
  text-align: center;
  margin-right: 6px;
  display: flex;
  flex-direction: column;
  line-height: 16px;
}

.clock b {
  font-family: "Liberation Serif", serif;
  font-size: 18px;
  color: #c4c6cc;
}

.clock span {
  font-family: "DejaVu Sans", sans-serif;
  font-size: 11px;
  color: #a6a8ae;
  white-space: nowrap;
}

.tb-bar {
  width: 4px;
  height: 32px;
  background-color: #2fd34a;
  margin: 0 2px 0 5px;
}
```
